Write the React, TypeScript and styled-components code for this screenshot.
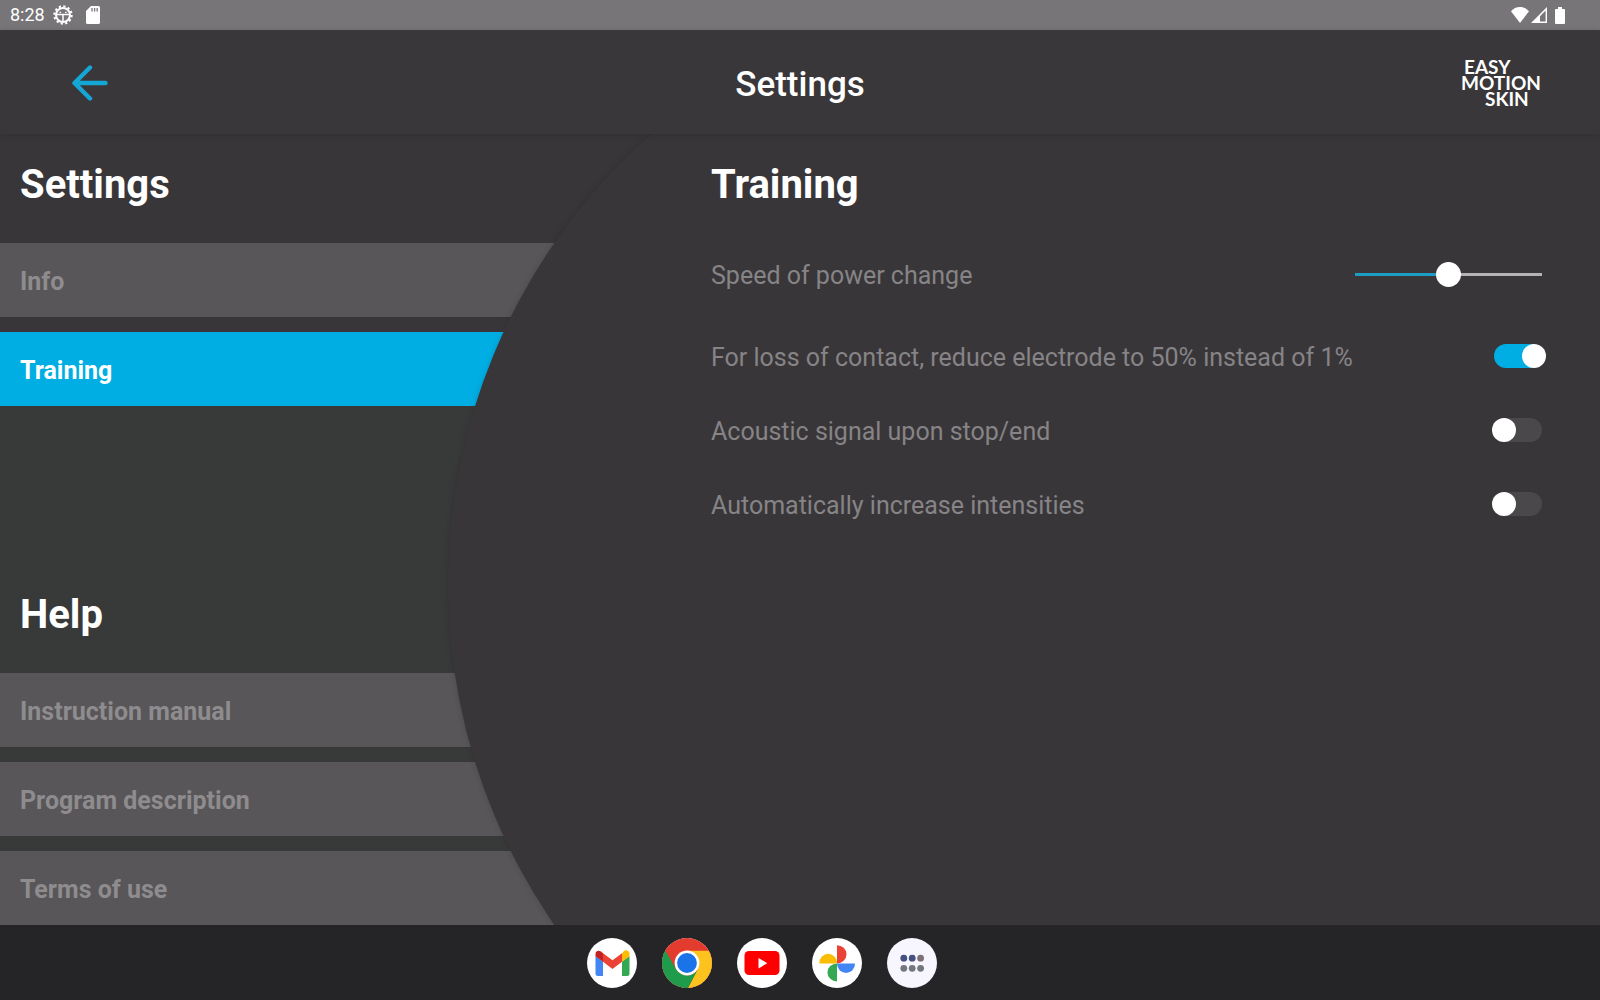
import React, { useState } from "react";
import styled, { createGlobalStyle } from "styled-components";

const accent = "#00aee3";
const surface = "#393639";

const GlobalStyle = createGlobalStyle`
  *, *::before, *::after { box-sizing: border-box; }
  body {
    margin: 0;
    background: ${surface};
    color: #fff;
    font-family: Roboto, "Noto Sans", sans-serif;
  }
  button, input { font: inherit; color: inherit; margin: 0; }
  button { border: 0; padding: 0; background: none; cursor: pointer; }
`;

const Screen = styled.div`
  display: flex;
  flex-direction: column;
  min-height: 100vh;
`;

const StatusBar = styled.div`
  display: flex;
  align-items: center;
  justify-content: space-between;
  height: 30px;
  padding: 0 35px 0 10px;
  background: #777577;
  font-size: 18px;
  line-height: 30px;
`;

const StatusGroup = styled.div<{ $gap: number }>`
  display: flex;
  align-items: center;
  gap: ${(p) => p.$gap}px;
  svg { display: block; }
`;

const Header = styled.header`
  display: grid;
  grid-template-columns: 1fr auto 1fr;
  align-items: center;
  height: 104px;
  padding: 2px 62px 0 70px;
  background: #3a373a;
  box-shadow: 0 1px 6px rgba(0, 0, 0, 0.14);
  position: relative;
  z-index: 2;
`;

const BackButton = styled.button`
  display: flex;
  width: 40px;
  height: 40px;
  align-items: center;
  justify-content: center;
  color: #14a7d6;
`;

const PageTitle = styled.h1`
  margin: 0;
  padding: 4px 8px 0 0;
  font-size: 35px;
  line-height: 44px;
  font-weight: 500;
`;

const Logo = styled.div`
  display: flex;
  flex-direction: column;
  justify-self: end;
  width: 77px;
  font-family: Lato, sans-serif;
  font-size: 19px;
  line-height: 16px;
  font-weight: 700;
`;

const LogoLine = styled.span<{ $indent: number }>`
  padding-left: ${(p) => p.$indent}px;
`;

const Body = styled.div`
  flex: 1;
  display: grid;
  grid-template-columns: 28% 1fr;
  overflow: hidden;
  background: linear-gradient(${surface} 190px, #383939 280px);
`;

const Sidebar = styled.nav`
  display: flex;
  flex-direction: column;
  justify-content: space-between;
  gap: 40px;
`;

const SectionTitle = styled.h2`
  margin: 0;
  padding: 26px 20px 0;
  font-size: 40px;
  line-height: 50px;
  font-weight: 700;
`;

const Menu = styled.ul`
  display: flex;
  flex-direction: column;
  gap: 15px;
  margin: 0;
  padding: 33px 0 0;
  list-style: none;
`;

const MenuButton = styled.button<{ $active: boolean }>`
  display: block;
  width: 600px;
  height: 74px;
  padding: 4px 20px 0;
  text-align: left;
  font-size: 25px;
  line-height: 30px;
  font-weight: 700;
  color: ${(p) => (p.$active ? "#fff" : "#8e8c8e")};
  background: ${(p) => (p.$active ? accent : "#585658")};
`;

const Panel = styled.main`
  position: relative;
  padding: 0 58px 0 263px;

  &::before {
    content: "";
    position: absolute;
    top: -150px;
    left: 0;
    right: -60px;
    height: 1200px;
    border-radius: 600px 0 0 600px;
    background: ${surface};
    box-shadow: 0 0 6px rgba(0, 0, 0, 0.14);
  }
`;

const PanelContent = styled.section`
  position: relative;
  ${SectionTitle} { padding: 26px 0 0; }
`;

const SettingRow = styled.div<{ $tall?: boolean }>`
  display: flex;
  align-items: center;
  justify-content: space-between;
  height: ${(p) => (p.$tall ? 90 : 74)}px;
  margin-top: ${(p) => (p.$tall ? 19 : 0)}px;
`;

const SettingLabel = styled.label`
  padding-top: 4px;
  font-size: 25px;
  line-height: 30px;
  color: #868486;
`;

const Slider = styled.input`
  appearance: none;
  width: 187px;
  height: 26px;
  background: transparent;
  cursor: pointer;

  &::-webkit-slider-runnable-track {
    height: 3px;
    background: linear-gradient(
      to right,
      #1d9dc4 var(--level),
      #b4b2b4 var(--level)
    );
  }
  &::-webkit-slider-thumb {
    appearance: none;
    width: 25px;
    height: 25px;
    margin-top: -11px;
    border-radius: 50%;
    background: #fff;
  }
`;

const Toggle = styled.input`
  appearance: none;
  display: flex;
  width: 48px;
  height: 24px;
  border-radius: 12px;
  background: #4a484a;
  cursor: pointer;

  &::before {
    content: "";
    flex: none;
    width: 24px;
    height: 24px;
    margin-left: -2px;
    border-radius: 50%;
    background: #fff;
  }
  &:checked { background: ${accent}; }
  &:checked::before { margin-left: 28px; }
`;

const Dock = styled.footer`
  display: flex;
  align-items: center;
  justify-content: center;
  gap: 25px;
  height: 75px;
  padding-right: 76px;
  background: #252427;
`;

const DockButton = styled.button<{ $tint?: string }>`
  width: 50px;
  height: 50px;
  border-radius: 50%;
  overflow: hidden;
  background: ${(p) => p.$tint ?? "#fff"};
  svg { display: block; }
`;

const GearIcon = () => (
  <svg width="20" height="20" viewBox="0 0 20 20" fill="none" stroke="#fff">
    <circle cx="10" cy="10" r="8.700" strokeWidth="2" strokeDasharray="2.270 2.285" />
    <circle cx="10" cy="10" r="7" strokeWidth="2" />
    <path d="M3.500 9.600h13M10 9.600v6.400" strokeWidth="1.500" />
    <path d="M6.500 7.400h1.600M12 7.400h1.600" strokeWidth="1.400" />
  </svg>
);

const SdIcon = () => (
  <svg width="14" height="18" viewBox="0 0 14 18">
    <path fill="#fff" d="M5 0h7.400A1.600 1.600 0 0 1 14 1.600v14.800a1.600 1.600 0 0 1-1.600 1.600H1.600A1.600 1.600 0 0 1 0 16.400V5z" />
    <path stroke="#777577" strokeWidth="1.300" d="M6 2v3.600M8.600 2v3.600M11.200 2v3.600" />
  </svg>
);

const WifiIcon = () => (
  <svg width="18" height="16" viewBox="0 0 18 16">
    <path fill="#fff" d="M9 16 0 4.200C2.300 1.600 5.400 0 9 0s6.700 1.600 9 4.200z" />
  </svg>
);

const SignalIcon = () => (
  <svg width="16" height="16" viewBox="0 0 16 16">
    <path fill="#fff" fillRule="evenodd" d="M16 0v16H0zM14.600 3.600V14.600H9V9.200z" />
  </svg>
);

const BatteryIcon = () => (
  <svg width="10" height="17" viewBox="0 0 10 17">
    <path fill="#fff" d="M3 0h4v2h2a1 1 0 0 1 1 1v13a1 1 0 0 1-1 1H1a1 1 0 0 1-1-1V3a1 1 0 0 1 1-1h2z" />
  </svg>
);

const ArrowIcon = () => (
  <svg width="36" height="36" viewBox="0 0 36 36" fill="none" stroke="currentColor" strokeWidth="4.400" strokeLinecap="round" strokeLinejoin="round">
    <path d="M18 2.500 2.500 18 18 33.500M3 18h30.500" />
  </svg>
);

const GmailIcon = () => (
  <svg width="50" height="50" viewBox="0 0 50 50">
    <path fill="#4285f4" d="M8.500 18l7.500 5.600V38h-5a2.500 2.500 0 0 1-2.500-2.500z" />
    <path fill="#34a853" d="M42.500 18 35 23.600V38h5a2.500 2.500 0 0 0 2.500-2.500z" />
    <path fill="#fbbc04" d="M35 15.400v8.400l7.500-5.600v-2.400c0-3-3.400-4.400-5.600-2.700z" />
    <path fill="#ea4335" d="M16 23.800v-8.600l9.500 7 9.500-7v8.600l-9.500 7.200z" />
    <path fill="#c5221f" d="M8.500 15.800v2.400l7.500 5.600v-8.600l-2-1.600c-2.200-1.700-5.500-.6-5.500 2.200z" />
  </svg>
);

const ChromeIcon = () => (
  <svg width="50" height="50" viewBox="0 0 50 50">
    <rect width="50" height="50" fill="#e33b2e" />
    <path fill="#fcc31e" d="M25 12.800H50V50H26l9.800-19z" />
    <path fill="#1e9b4b" d="M3.300 12.500 14.200 31.200A12.500 12.500 0 0 0 35.800 31.200L26 50H0V12.500z" />
    <circle cx="25" cy="25" r="12.400" fill="#fff" />
    <circle cx="25" cy="25" r="9.900" fill="#1a73e8" />
  </svg>
);

const YoutubeIcon = () => (
  <svg width="50" height="50" viewBox="0 0 50 50">
    <rect x="7.500" y="13" width="35" height="24" rx="4.500" fill="#f00" />
    <path fill="#fff" d="M21.500 20v10.400l8.800-5.200z" />
  </svg>
);

const PhotosIcon = () => (
  <svg width="50" height="50" viewBox="0 0 50 50">
    <path fill="#ea4335" d="M25 7.200a9.500 9.100 0 0 1 0 18.200z" />
    <path fill="#4285f4" d="M43 25.400a9 9.600 0 0 1-18 0z" />
    <path fill="#34a853" d="M25 43.500a9.500 9 0 0 1 0-18.100z" />
    <path fill="#fbbc04" d="M7.300 25.400a8.850 9.600 0 0 1 17.700 0z" />
  </svg>
);

const AppsIcon = () => (
  <svg width="50" height="50" viewBox="0 0 50 50">
    <g fill="#435080">
      <circle cx="16.800" cy="20.200" r="3.400" />
      <circle cx="25.200" cy="20.200" r="3.400" />
    </g>
    <circle cx="33.600" cy="20.200" r="3.400" fill="#7d7078" />
    <g fill="#74767e">
      <circle cx="16.800" cy="30.300" r="3.400" />
      <circle cx="25.200" cy="30.300" r="3.400" />
      <circle cx="33.600" cy="30.300" r="3.400" />
    </g>
  </svg>
);

const settingsItems = ["Info", "Training"];
const helpItems = ["Instruction manual", "Program description", "Terms of use"];

const dockApps = [
  { name: "Gmail", Icon: GmailIcon },
  { name: "Chrome", Icon: ChromeIcon },
  { name: "YouTube", Icon: YoutubeIcon },
  { name: "Photos", Icon: PhotosIcon },
  { name: "All apps", Icon: AppsIcon, tint: "#f7f5fd" },
];

const switches = [
  { id: "contact", label: "For loss of contact, reduce electrode to 50% instead of 1%", on: true },
  { id: "acoustic", label: "Acoustic signal upon stop/end", on: false },
  { id: "intensity", label: "Automatically increase intensities", on: false },
];

type MenuSectionProps = {
  title: string;
  items: string[];
  active: string;
  onSelect: (item: string) => void;
};

const MenuSection = ({ title, items, active, onSelect }: MenuSectionProps) => (
  <div>
    <SectionTitle>{title}</SectionTitle>
    <Menu>
      {items.map((item) => (
        <li key={item}>
          <MenuButton $active={item === active} onClick={() => onSelect(item)}>
            {item}
          </MenuButton>
        </li>
      ))}
    </Menu>
  </div>
);

export default function App() {
  const [active, setActive] = useState("Training");
  const [speed, setSpeed] = useState(50);

  return (
    <Screen>
      <GlobalStyle />
      <StatusBar>
        <StatusGroup $gap={8}>
          <span>8:28</span>
          <StatusGroup $gap={13}>
            <GearIcon />
            <SdIcon />
          </StatusGroup>
        </StatusGroup>
        <StatusGroup $gap={8}>
          <StatusGroup $gap={2}>
            <WifiIcon />
            <SignalIcon />
          </StatusGroup>
          <BatteryIcon />
        </StatusGroup>
      </StatusBar>

      <Header>
        <BackButton aria-label="Back">
          <ArrowIcon />
        </BackButton>
        <PageTitle>Settings</PageTitle>
        <Logo>
          <LogoLine $indent={3}>EASY</LogoLine>
          <LogoLine $indent={0}>MOTION</LogoLine>
          <LogoLine $indent={24}>SKIN</LogoLine>
        </Logo>
      </Header>

      <Body>
        <Sidebar>
          <MenuSection title="Settings" items={settingsItems} active={active} onSelect={setActive} />
          <MenuSection title="Help" items={helpItems} active={active} onSelect={setActive} />
        </Sidebar>
        <Panel>
          <PanelContent>
            <SectionTitle>Training</SectionTitle>
            <SettingRow $tall>
              <SettingLabel htmlFor="speed">Speed of power change</SettingLabel>
              <Slider
                id="speed"
                type="range"
                min={0}
                max={100}
                value={speed}
                onChange={(e) => setSpeed(Number(e.target.value))}
                style={{ "--level": `${speed}%` } as React.CSSProperties}
              />
            </SettingRow>
            {switches.map((s) => (
              <SettingRow key={s.id}>
                <SettingLabel htmlFor={s.id}>{s.label}</SettingLabel>
                <Toggle id={s.id} type="checkbox" role="switch" defaultChecked={s.on} />
              </SettingRow>
            ))}
          </PanelContent>
        </Panel>
      </Body>

      <Dock>
        {dockApps.map(({ name, Icon, tint }) => (
          <DockButton key={name} aria-label={name} $tint={tint}>
            <Icon />
          </DockButton>
        ))}
      </Dock>
    </Screen>
  );
}
